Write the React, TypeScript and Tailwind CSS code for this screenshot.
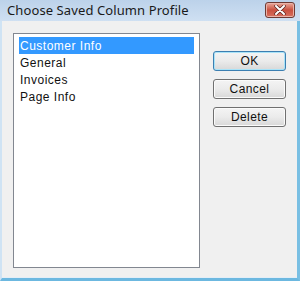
import { useState } from "react";

const profiles = ["Customer Info", "General", "Invoices", "Page Info"];

function DlgButton({ label, isDefault }: { label: string; isDefault?: boolean }) {
  return (
    <button
      className={`w-[73px] h-[20px] rounded-[3px] border text-[12px] leading-none tracking-[0.4px] text-[#111] bg-gradient-to-b from-[#f4f4f4] via-[#ebebeb] to-[#d8d8d8] ${
        isDefault ? "border-[#3c7fb1] shadow-[inset_0_0_0_1px_#a9e3f8]" : "border-[#707070] shadow-[inset_0_0_0_1px_#fbfbfb]"
      }`}
    >
      {label}
    </button>
  );
}

export default function App() {
  const [selected, setSelected] = useState(0);

  return (
    <div
      className="w-[300px] h-[281px] flex flex-col bg-[#c9dcf0] overflow-hidden"
      style={{ fontFamily: '"Liberation Sans", Arial, sans-serif' }}
    >
      {/* title bar */}
      <div className="h-[21px] shrink-0 flex items-center justify-between pl-[7px] pr-[5px] bg-gradient-to-b from-[#bcd2ea] to-[#cfe0f2]">
        <span className="text-[13px] text-[#1a1a1a] tracking-[0.1px]" style={{ fontFamily: '"Noto Sans", "Open Sans", sans-serif' }}>
          Choose Saved Column Profile
        </span>
        <div className="w-[30px] h-[16px] mt-[-2px] rounded-[3px] border border-[#6e3a34] bg-gradient-to-b from-[#e8a89c] via-[#c9503f] to-[#d7705f] flex items-center justify-center shadow-[inset_0_0_0_1px_#eab3a8]">
          <svg width="12" height="10" viewBox="0 0 12 10">
            <path d="M2 1 L10 9 M10 1 L2 9" stroke="#5a2520" strokeWidth="3.4" strokeLinecap="round" />
            <path d="M2 1 L10 9 M10 1 L2 9" stroke="#ffffff" strokeWidth="2" strokeLinecap="round" />
          </svg>
        </div>
      </div>

      {/* client area */}
      <div className="flex-1 flex border-l-2 border-l-[#cfe3f4] border-r-[3px] border-r-[#79bfe3] border-b-[3px] border-b-[#6cb8e0]">
        <div className="flex-1 flex bg-[#f0f0f0] pl-[11px] pt-[12px] pb-[9px] border-b border-b-[#e4eef7]">
          <div className="w-[187px] h-[235px] bg-white border border-[#828790] pt-[3px] px-[5px]">
            {profiles.map((p, i) => (
              <div
                key={p}
                onClick={() => setSelected(i)}
                className={`h-[17px] flex items-center pl-[1px] text-[12px] tracking-[0.5px] ${
                  i === selected ? "bg-[#3399ff] text-white" : "text-[#111]"
                }`}
              >
                {p}
              </div>
            ))}
          </div>
          <div className="flex flex-col gap-[8px] ml-[13px] pt-[18px]">
            <DlgButton label="OK" isDefault />
            <DlgButton label="Cancel" />
            <DlgButton label="Delete" />
          </div>
        </div>
      </div>
    </div>
  );
}
